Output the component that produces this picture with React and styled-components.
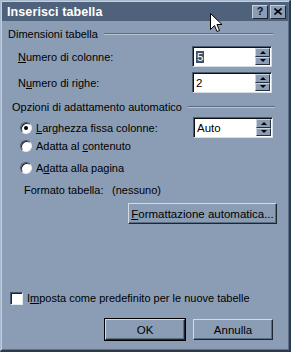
import React from "react";
import styled, { createGlobalStyle } from "styled-components";

const GlobalStyle = createGlobalStyle`
  html, body {
    margin: 0;
    padding: 0;
    background: #8a9db5;
  }
  body {
    font-family: "Liberation Sans", Arial, sans-serif;
    font-size: 11px;
    color: #000;
  }
`;

const Window = styled.div`
  position: relative;
  width: 291px;
  height: 352px;
  box-sizing: border-box;
  background: #8a9db5;
  border-top: 1px solid #a9b8ca;
  border-left: 1px solid #a9b8ca;
  border-right: 2px solid #2e3a4a;
  border-bottom: 2px solid #2e3a4a;
  box-shadow: inset 1px 1px 0 #c3cfdc, inset -1px -1px 0 #5f7188;
  padding: 1px 1px 0 1px;
  display: flex;
  flex-direction: column;
`;

const TitleBar = styled.div`
  height: 19px;
  background: #4e627c;
  display: flex;
  align-items: center;
  padding: 0 2px 0 5px;
  gap: 2px;
`;

const Title = styled.div`
  flex: 1;
  color: #fff;
  font-weight: bold;
  font-size: 12.5px;
  letter-spacing: 0.1px;
`;

const TitleButton = styled.div`
  width: 16px;
  height: 14px;
  box-sizing: border-box;
  background: #8a9db5;
  border-top: 1px solid #c3cfdc;
  border-left: 1px solid #c3cfdc;
  border-right: 1px solid #1f2733;
  border-bottom: 1px solid #1f2733;
  display: flex;
  align-items: center;
  justify-content: center;
  font-weight: bold;
  font-size: 11px;
  line-height: 1;
  color: #111;
`;

const Content = styled.div`
  flex: 1;
  display: flex;
  flex-direction: column;
`;

const GroupHeader = styled.div`
  display: flex;
  align-items: center;
  height: 14px;
  margin-top: ${(p) => p.$top}px;
  padding-left: ${(p) => p.$indent}px;
  padding-right: ${(p) => p.$right}px;
  gap: 6px;
`;

const Rule = styled.div`
  flex: 1;
  height: 0;
  border-top: 1px solid #5a6d84;
  border-bottom: 1px solid #b5c3d4;
`;

const Row = styled.div`
  display: flex;
  align-items: center;
  height: ${(p) => p.$h}px;
  margin-top: ${(p) => p.$top}px;
  padding-left: ${(p) => p.$indent}px;
`;

const Label = styled.span`
  width: ${(p) => (p.$w ? `${p.$w}px` : "auto")};
  flex: ${(p) => (p.$w ? "none" : "1")};
  white-space: nowrap;
`;

const Key = styled.span`
  text-decoration: underline;
`;

const Spin = styled.div`
  width: 80px;
  height: 21px;
  box-sizing: border-box;
  display: flex;
  background: #fff;
  border-top: 1px solid #4a5a6e;
  border-left: 1px solid #4a5a6e;
  border-right: 1px solid #d6dee8;
  border-bottom: 1px solid #d6dee8;
  box-shadow: inset 1px 1px 0 #111;
`;

const SpinValue = styled.div`
  flex: 1;
  display: flex;
  align-items: center;
  padding-left: 3px;
  font-size: 11.5px;
`;

const Selected = styled.span`
  background: #3f516a;
  color: #fff;
  padding: 0 1px;
`;

const SpinButtons = styled.div`
  width: 15px;
  display: flex;
  flex-direction: column;
  padding: 1px 1px 1px 0;
`;

const Arrow = styled.div`
  flex: 1;
  box-sizing: border-box;
  background: #8a9db5;
  border-top: 1px solid #c9d4e1;
  border-left: 1px solid #c9d4e1;
  border-right: 1px solid #26303d;
  border-bottom: 1px solid #26303d;
  display: flex;
  align-items: center;
  justify-content: center;

  &::after {
    content: "";
    width: 0;
    height: 0;
    border-left: 3px solid transparent;
    border-right: 3px solid transparent;
    ${(p) =>
      p.$down
        ? "border-top: 3px solid #000;"
        : "border-bottom: 3px solid #000;"}
  }
`;

const Radio = styled.div`
  width: 12px;
  height: 12px;
  box-sizing: border-box;
  border-radius: 50%;
  background: #fff;
  border: 1px solid;
  border-color: #45556a #e4eaf1 #e4eaf1 #45556a;
  box-shadow: inset 1px 1px 0 #222;
  margin-right: 4px;
  display: flex;
  align-items: center;
  justify-content: center;

  &::after {
    content: "";
    display: ${(p) => (p.$checked ? "block" : "none")};
    width: 4px;
    height: 4px;
    border-radius: 50%;
    background: #000;
  }
`;

const Check = styled.div`
  width: 13px;
  height: 13px;
  box-sizing: border-box;
  background: #fff;
  border-top: 1px solid #45556a;
  border-left: 1px solid #45556a;
  border-right: 1px solid #e4eaf1;
  border-bottom: 1px solid #e4eaf1;
  box-shadow: inset 1px 1px 0 #222;
  margin-right: 4px;
`;

const Button = styled.div`
  width: ${(p) => p.$w}px;
  height: 23px;
  box-sizing: border-box;
  background: #8a9db5;
  border: 1px solid ${(p) => (p.$default ? "#000" : "transparent")};
  display: flex;
  white-space: nowrap;

  & > span {
    flex: 1;
    display: flex;
    align-items: center;
    justify-content: center;
    border-top: 1px solid #d2dce7;
    border-left: 1px solid #d2dce7;
    border-right: 1px solid #1e2630;
    border-bottom: 1px solid #1e2630;
    box-shadow: inset -1px -1px 0 #5b6d83;
    font-size: 11.5px;
  }
`;

const Spacer = styled.div`
  flex: 1;
`;

const Footer = styled.div`
  display: flex;
  justify-content: flex-end;
  gap: 6px;
  padding-right: 14px;
  margin-top: 12px;
  margin-bottom: 9px;
`;

const Cursor = styled.svg`
  position: absolute;
  left: 209px;
  top: 12px;
`;

const SpinBox = ({ children }) => (
  <Spin>
    <SpinValue>{children}</SpinValue>
    <SpinButtons>
      <Arrow />
      <Arrow $down />
    </SpinButtons>
  </Spin>
);

export default function App() {
  return (
    <>
      <GlobalStyle />
      <Window>
        <TitleBar>
          <Title>Inserisci tabella</Title>
          <TitleButton>?</TitleButton>
          <TitleButton>
            <svg width="8" height="7" viewBox="0 0 8 7">
              <path d="M0.5 0.5 L7.5 6.5 M7.5 0.5 L0.5 6.5" stroke="#000" strokeWidth="1.6" />
            </svg>
          </TitleButton>
        </TitleBar>
        <Content>
          <GroupHeader $top={6} $indent={6} $right={15}>
            <span>Dimensioni tabella</span>
            <Rule />
          </GroupHeader>
          <Row $h={21} $top={5} $indent={16}>
            <Label $w={174}>
              <Key>N</Key>umero di colonne:
            </Label>
            <SpinBox>
              <Selected>5</Selected>
            </SpinBox>
          </Row>
          <Row $h={21} $top={5} $indent={16}>
            <Label $w={174}>
              N<Key>u</Key>mero di righe:
            </Label>
            <SpinBox>2</SpinBox>
          </Row>
          <GroupHeader $top={7} $indent={10} $right={13}>
            <span>Opzioni di adattamento automatico</span>
            <Rule />
          </GroupHeader>
          <Row $h={21} $top={3} $indent={18}>
            <Radio $checked />
            <Label $w={157}>
              <Key>L</Key>arghezza fissa colonne:
            </Label>
            <SpinBox>Auto</SpinBox>
          </Row>
          <Row $h={16} $top={0} $indent={18}>
            <Radio />
            <Label>
              Adatta al <Key>c</Key>ontenuto
            </Label>
          </Row>
          <Row $h={16} $top={6} $indent={18}>
            <Radio />
            <Label>
              A<Key>d</Key>atta alla pagina
            </Label>
          </Row>
          <Row $h={16} $top={6} $indent={22}>
            <Label $w={88}>Formato tabella:</Label>
            <Label>(nessuno)</Label>
          </Row>
          <Row $h={23} $top={4} $indent={125}>
            <Button $w={151}>
              <span>
                <Key>F</Key>ormattazione automatica...
              </span>
            </Button>
          </Row>
          <Spacer />
          <Row $h={16} $top={0} $indent={8}>
            <Check />
            <Label>
              I<Key>m</Key>posta come predefinito per le nuove tabelle
            </Label>
          </Row>
          <Footer>
            <Button $w={82} $default>
              <span>OK</span>
            </Button>
            <Button $w={82}>
              <span>Annulla</span>
            </Button>
          </Footer>
        </Content>
        <Cursor width="13" height="21" viewBox="0 0 13 21">
          <path
            d="M0.5 0.5 L0.5 16.5 L4.5 12.5 L7 18.5 L9.5 17.5 L7 11.5 L12 11.5 Z"
            fill="#fff"
            stroke="#000"
            strokeWidth="1"
          />
        </Cursor>
      </Window>
    </>
  );
}
